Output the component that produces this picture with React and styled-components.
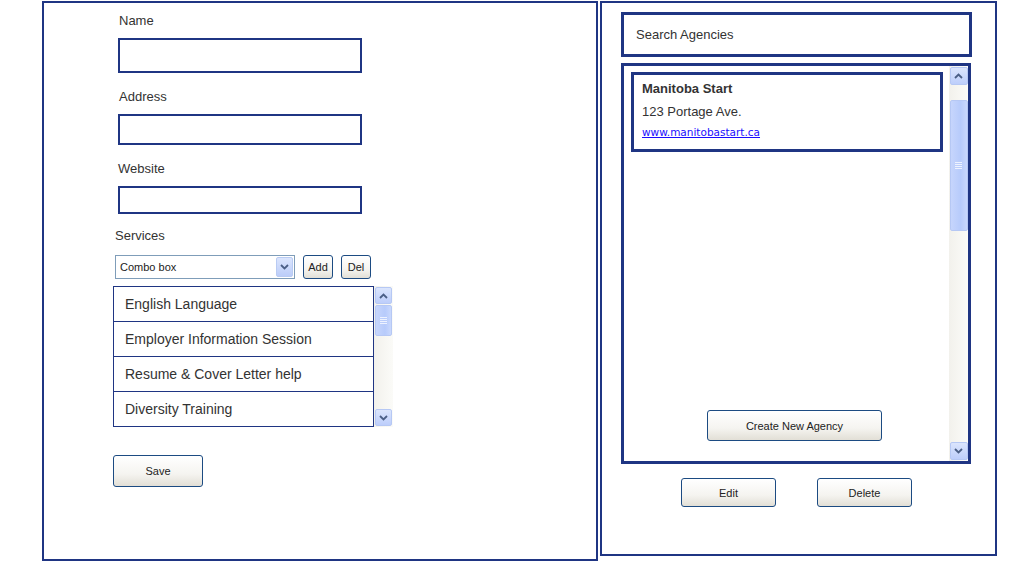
import React from "react";
import styled, { createGlobalStyle } from "styled-components";

const GlobalStyle = createGlobalStyle`
  body {
    margin: 0;
    background: #fff;
    font-family: "Liberation Sans", Arial, sans-serif;
    color: #333;
  }
  * { box-sizing: border-box; }
`;

const navy = "#1f3583";

const Page = styled.div`
  display: flex;
  align-items: flex-start;
  gap: 2px;
  padding: 1px 0 0 42px;
  width: 1036px;
  height: 563px;
`;

const Panel = styled.div`
  width: ${(p) => p.$w}px;
  height: ${(p) => p.$h}px;
  border: 2px solid ${navy};
  display: flex;
  flex-direction: column;
  align-items: flex-start;
  padding: ${(p) => p.$pad};
`;

const Label = styled.div`
  font-size: 13px;
  line-height: 16px;
  color: #333;
  margin-top: ${(p) => p.$top || 0}px;
  margin-left: ${(p) => p.$indent || 0}px;
`;

const TextBox = styled.div`
  width: 244px;
  height: ${(p) => p.$h}px;
  border: 2px solid ${navy};
  margin-top: ${(p) => p.$top}px;
  margin-left: 5px;
  background: #fff;
`;

const ComboRow = styled.div`
  display: flex;
  gap: 8px;
  margin-top: 11px;
  margin-left: 2px;
`;

const Combo = styled.div`
  width: 180px;
  height: 24px;
  border: 1px solid #7f9db9;
  display: flex;
  align-items: center;
  justify-content: space-between;
  padding: 0 1px 0 4px;
  font-size: 11px;
  color: #222;
`;

const DropBtn = styled.div`
  width: 17px;
  height: 20px;
  border: 1px solid #b9cbf3;
  border-radius: 2px;
  background: linear-gradient(#dbe5fd, #bccdf9);
  display: flex;
  align-items: center;
  justify-content: center;
`;

const Button = styled.div`
  width: ${(p) => p.$w}px;
  height: ${(p) => p.$h}px;
  border: 1px solid #1c4b82;
  border-radius: 3px;
  background: linear-gradient(#ffffff 0%, #f5f4f0 60%, #e2dfd6 100%);
  display: flex;
  align-items: center;
  justify-content: center;
  font-size: 11px;
  color: #222;
  margin-top: ${(p) => p.$top || 0}px;
  margin-left: ${(p) => p.$left || 0}px;
  margin-bottom: ${(p) => p.$bottom || 0}px;
  flex-shrink: 0;
`;

const ListWrap = styled.div`
  display: flex;
  margin-top: 7px;
`;

const ServiceList = styled.div`
  width: 261px;
  border: 1px solid ${navy};
  display: flex;
  flex-direction: column;
`;

const ServiceRow = styled.div`
  height: 35px;
  display: flex;
  align-items: center;
  padding-left: 11px;
  font-size: 14px;
  color: #333;
  border-bottom: 1px solid ${navy};
  &:last-child {
    height: 34px;
    border-bottom: none;
  }
`;

const Track = styled.div`
  width: ${(p) => p.$w}px;
  height: ${(p) => p.$h}px;
  background: linear-gradient(90deg, #f2f1ec, #fbfbf8);
  display: flex;
  flex-direction: column;
  align-items: center;
  padding: 1px 0;
  flex-shrink: 0;
`;

const ScrollBtn = styled.div`
  width: ${(p) => p.$w}px;
  height: ${(p) => p.$w}px;
  border: 1px solid #b6c8f4;
  border-radius: 2px;
  background: linear-gradient(#dbe5fd, #bdcefb);
  display: flex;
  align-items: center;
  justify-content: center;
  flex-shrink: 0;
`;

const Thumb = styled.div`
  width: ${(p) => p.$w}px;
  height: ${(p) => p.$h}px;
  margin-top: ${(p) => p.$top}px;
  border: 1px solid #b6c8f4;
  border-radius: 2px;
  background: linear-gradient(90deg, #c6d5fc, #b7cbfb 60%, #c9d8fd);
  display: flex;
  align-items: center;
  justify-content: center;
`;

const Grip = styled.div`
  width: 7px;
  height: 7px;
  background: repeating-linear-gradient(#eef3ff 0 1px, transparent 1px 2px);
`;

const Spacer = styled.div`
  flex: 1;
`;

const SearchBox = styled.div`
  width: 351px;
  height: 45px;
  border: 3px solid ${navy};
  display: flex;
  align-items: center;
  padding-left: 12px;
  font-size: 13px;
  color: #333;
`;

const AgencyBox = styled.div`
  width: 350px;
  height: 401px;
  margin-top: 6px;
  border: 3px solid ${navy};
  display: flex;
`;

const AgencyContent = styled.div`
  flex: 1;
  display: flex;
  flex-direction: column;
  align-items: flex-start;
  padding: 6px 0 0 7px;
`;

const Card = styled.div`
  width: 312px;
  height: 80px;
  border: 3px solid ${navy};
  padding: 6px 0 0 8px;
`;

const CardTitle = styled.div`
  font-size: 13px;
  line-height: 16px;
  font-weight: bold;
  color: #333;
`;

const CardLine = styled.div`
  font-size: 13px;
  line-height: 16px;
  margin-top: 7px;
  color: #333;
`;

const CardLink = styled.a`
  display: inline-block;
  margin-top: 5px;
  font-family: "Comic Sans MS", "DejaVu Sans", sans-serif;
  font-size: 10.5px;
  line-height: 14px;
  color: #1a0dff;
  text-decoration: underline;
`;

const ButtonRow = styled.div`
  display: flex;
  gap: 41px;
  margin-top: 14px;
  margin-left: 60px;
`;

const Chevron = ({ up }) => (
  <svg width="9" height="6" viewBox="0 0 9 6">
    <path
      d={up ? "M1 5 L4.5 1.5 L8 5" : "M1 1 L4.5 4.5 L8 1"}
      fill="none"
      stroke="#4b5f86"
      strokeWidth="1.8"
    />
  </svg>
);

const ScrollBar = ({ w, h, btn, thumbTop, thumbH }) => (
  <Track $w={w} $h={h}>
    <ScrollBtn $w={btn}>
      <Chevron up />
    </ScrollBtn>
    <Thumb $w={btn} $h={thumbH} $top={thumbTop}>
      <Grip />
    </Thumb>
    <Spacer />
    <ScrollBtn $w={btn}>
      <Chevron />
    </ScrollBtn>
  </Track>
);

const services = [
  "English Language",
  "Employer Information Session",
  "Resume & Cover Letter help",
  "Diversity Training",
];

export default function App() {
  return (
    <>
      <GlobalStyle />
      <Page>
        <Panel $w={556} $h={560} $pad="10px 0 0 69px">
          <Label $indent={6}>Name</Label>
          <TextBox $h={35} $top={9} />
          <Label $indent={6} $top={16}>Address</Label>
          <TextBox $h={31} $top={9} />
          <Label $indent={5} $top={16}>Website</Label>
          <TextBox $h={28} $top={9} />
          <Label $indent={2} $top={14}>Services</Label>
          <ComboRow>
            <Combo>
              Combo box
              <DropBtn>
                <Chevron />
              </DropBtn>
            </Combo>
            <Button $w={30} $h={24}>Add</Button>
            <Button $w={30} $h={24}>Del</Button>
          </ComboRow>
          <ListWrap>
            <ServiceList>
              {services.map((s) => (
                <ServiceRow key={s}>{s}</ServiceRow>
              ))}
            </ServiceList>
            <ScrollBar w={19} h={141} btn={17} thumbTop={1} thumbH={31} />
          </ListWrap>
          <Button $w={90} $h={32} $top={28}>Save</Button>
        </Panel>

        <Panel $w={397} $h={555} $pad="9px 0 0 19px">
          <SearchBox>Search Agencies</SearchBox>
          <AgencyBox>
            <AgencyContent>
              <Card>
                <CardTitle>Manitoba Start</CardTitle>
                <CardLine>123 Portage Ave.</CardLine>
                <CardLink href="#">www.manitobastart.ca</CardLink>
              </Card>
              <Spacer />
              <Button $w={175} $h={31} $left={76} $bottom={20}>
                Create New Agency
              </Button>
            </AgencyContent>
            <ScrollBar w={19} h={395} btn={18} thumbTop={15} thumbH={131} />
          </AgencyBox>
          <ButtonRow>
            <Button $w={95} $h={29}>Edit</Button>
            <Button $w={95} $h={29}>Delete</Button>
          </ButtonRow>
        </Panel>
      </Page>
    </>
  );
}
